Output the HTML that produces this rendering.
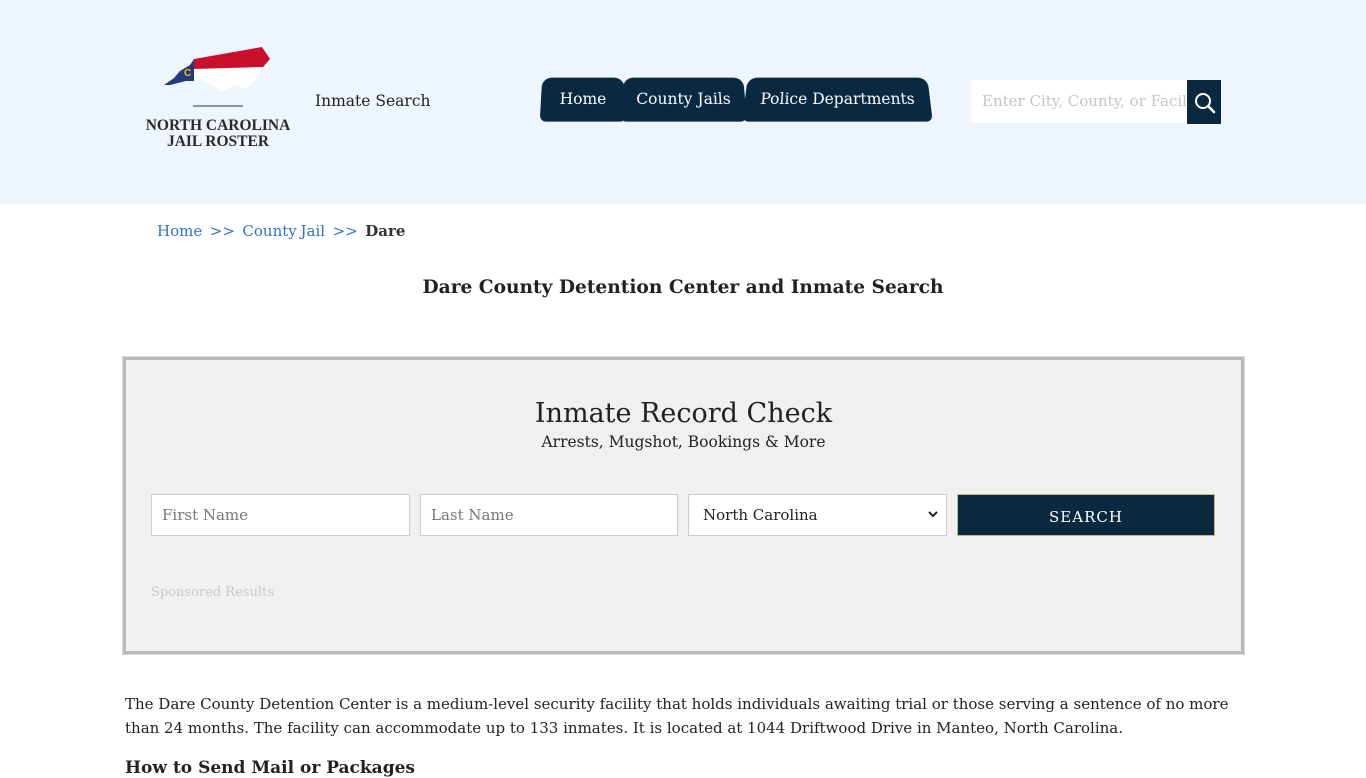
<!DOCTYPE html>
<html><head><meta charset="utf-8">
<style>
*{box-sizing:border-box;margin:0;padding:0}
html,body{width:1366px;height:768px;overflow:hidden;background:#fff}
body{font-family:"DejaVu Serif","Liberation Serif",serif;color:#222}
.hdr{position:absolute;left:0;top:0;width:1366px;height:204px;background:#eef5fe}
.logo{position:absolute;left:138px;top:44px;width:160px;text-align:center}
.logo .t{font-family:"Liberation Serif",serif;font-size:15.5px;line-height:16px;color:#2a2a2a;font-weight:bold;white-space:nowrap}
.isr{position:absolute;left:315px;top:92px;font-size:15.5px;color:#222}
.nav{position:absolute;top:77px;height:44px;background:#0b2841;color:#fff;font-size:15.5px;line-height:44px;text-align:center;border-radius:10px 10px 6px 6px;transform:perspective(40px) rotateX(3deg)}
.srch{position:absolute;left:971px;top:80px;width:216px;height:43px;background:#fff;font-size:15px;color:#c5c5c5;line-height:43px;padding-left:11px;white-space:nowrap;overflow:hidden}
.sbtn{position:absolute;left:1187px;top:80px;width:34px;height:44px;background:#0b2841}
.bc{position:absolute;left:157px;top:222px;font-size:15px;color:#2f6fd6;word-spacing:-1px}
.bc b{color:#333}
h1{position:absolute;left:0;width:1366px;top:277px;text-align:center;font-size:18.6px;font-weight:bold;color:#222}
.box{position:absolute;left:123px;top:357px;width:1121px;height:297px;background:#f0f0f0;border:3px solid #b9b9b9;outline:1px solid #d8d8d8}
.box h2{position:absolute;left:0;width:100%;top:38px;text-align:center;font-weight:normal;font-size:27px;color:#222}
.box .sub{position:absolute;left:0;width:100%;top:73px;text-align:center;font-size:15.5px;color:#222}
.in{position:absolute;top:134px;height:42px;background:#fff;border:1px solid #ccc;font-size:15px;line-height:40px;padding-left:10px;color:#777}
.btn{position:absolute;left:831px;top:134px;width:258px;height:42px;background:#0b2841;border:1px solid #c8b880;color:#fff;text-align:center;line-height:44px;font-size:15px;letter-spacing:1px}
.sp{position:absolute;left:25px;top:225px;font-size:13px;color:#c8c8c8}
.p{position:absolute;left:125px;top:692px;width:1105px;font-size:15px;line-height:24px;color:#222}
.h3{position:absolute;left:125px;top:758px;font-size:17px;font-weight:bold;color:#222}
</style></head><body>
<div class="hdr">
 <div class="logo">
  <svg width="110" height="50" viewBox="0 0 110 48" style="display:block;margin:0 0 0 24px">
   <path d="M2 40 L12 33 L18 26 L28 20 L32 14 L100 2 L108 14 L100 22 L96 32 L84 44 L74 40 L60 46 L46 38 L36 34 L24 36 L8 40 Z" fill="#fff"/>
   <path d="M32 14 L100 2 L108 14 L101 22 L32 24 Z" fill="#c8102e"/>
   <path d="M2 40 L12 33 L18 26 L28 20 L32 14 L32 36 L24 36 L8 40 Z" fill="#243a7a"/>
   <text x="22" y="31" font-size="10" fill="#f2c200" font-family="Liberation Sans" font-weight="bold">C</text>
  </svg>
  <div style="margin:11px auto 11px;width:50px;height:2px;background:#8a93a8"></div>
  <div class="t">NORTH CAROLINA<br>JAIL ROSTER</div>
 </div>
 <div class="isr">Inmate Search</div>
 <div class="nav" style="left:541px;width:84px">Home</div>
 <div class="nav" style="left:622px;width:123px">County Jails</div>
 <div class="nav" style="left:745px;width:185px">Police Departments</div>
 <div class="srch">Enter City, County, or Facil</div>
 <div class="sbtn"><svg width="34" height="44" viewBox="0 0 34 44"><circle cx="16" cy="21" r="7" fill="none" stroke="#fff" stroke-width="2"/><path d="M21 26 L27 32" stroke="#fff" stroke-width="2.6" stroke-linecap="round"/></svg></div>
</div>
<div class="bc">Home &nbsp;&gt;&gt;&nbsp; County Jail &nbsp;&gt;&gt;&nbsp; <b>Dare</b></div>
<h1>Dare County Detention Center and Inmate Search</h1>
<div class="box">
 <h2>Inmate Record Check</h2>
 <div class="sub">Arrests, Mugshot, Bookings &amp; More</div>
 <div class="in" style="left:25px;width:259px">First Name</div>
 <div class="in" style="left:294px;width:258px">Last Name</div>
 <div class="in" style="left:562px;width:259px;color:#222;padding-left:14px">North Carolina<svg style="position:absolute;right:8px;top:16px" width="10" height="8" viewBox="0 0 10 8"><path d="M1 1 L5 5 L9 1" stroke="#222" stroke-width="2" fill="none"/></svg></div>
 <div class="btn">SEARCH</div>
 <div class="sp">Sponsored Results</div>
</div>
<div class="p">The Dare County Detention Center is a medium-level security facility that holds individuals awaiting trial or those serving a sentence of no more than 24 months. The facility can accommodate up to 133 inmates. It is located at 1044 Driftwood Drive in Manteo, North Carolina.</div>
<div class="h3">How to Send Mail or Packages</div>
</body></html>
